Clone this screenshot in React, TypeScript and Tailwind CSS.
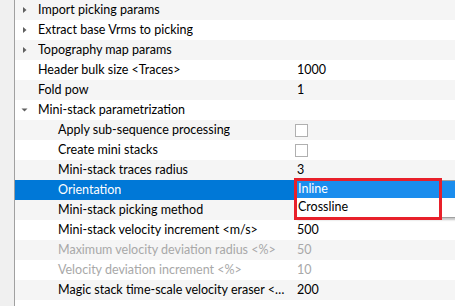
import React from 'react';

type Row = {
  label: string;
  value?: string;
  level: 0 | 1;
  arrow?: 'right' | 'down';
  checkbox?: boolean;
  disabled?: boolean;
  selected?: boolean;
};

const rows: Row[] = [
  { label: 'Import picking params', level: 0, arrow: 'right' },
  { label: 'Extract base Vrms to picking', level: 0, arrow: 'right' },
  { label: 'Topography map params', level: 0, arrow: 'right' },
  { label: 'Header bulk size <Traces>', value: '1000', level: 0 },
  { label: 'Fold pow', value: '1', level: 0 },
  { label: 'Mini-stack parametrization', level: 0, arrow: 'down' },
  { label: 'Apply sub-sequence processing', level: 1, checkbox: true },
  { label: 'Create mini stacks', level: 1, checkbox: true },
  { label: 'Mini-stack traces radius', value: '3', level: 1 },
  { label: 'Orientation', level: 1, selected: true },
  { label: 'Mini-stack picking method', level: 1 },
  { label: 'Mini-stack velocity increment <m/s>', value: '500', level: 1 },
  { label: 'Maximum velocity deviation radius <%>', value: '50', level: 1, disabled: true },
  { label: 'Velocity deviation increment <%>', value: '10', level: 1, disabled: true },
  { label: 'Magic stack time-scale velocity eraser <m/s>', value: '200', level: 1 },
];

const Arrow: React.FC<{ dir: 'right' | 'down' }> = ({ dir }) => (
  <svg width="8" height="8" viewBox="0 0 8 8" className="shrink-0">
    {dir === 'right' ? (
      <path d="M2 1 L5.5 4 L2 7 Z" fill="#606060" />
    ) : (
      <path d="M0.5 2.5 L6.5 2.5 L3.5 5.5 Z" fill="#606060" />
    )}
  </svg>
);

export default function App() {
  return (
    <div
      className="relative w-[455px] h-[306px] overflow-hidden bg-white flex text-[12.5px] text-black"
      style={{ fontFamily: 'Lato, "Segoe UI", sans-serif' }}
    >
      <div className="w-[15px] shrink-0 bg-[#f0f0f0] border-r border-[#a0a0a0]" />
      <div className="flex-1 flex flex-col">
        {rows.map((r, i) => (
          <div
            key={r.label}
            className={
              'h-[20px] flex items-center ' +
              (r.selected ? 'bg-[#0078d7] text-white' : i % 2 === 0 ? 'bg-[#f5f5f5]' : 'bg-white')
            }
          >
            <div className="w-[277px] shrink-0 flex items-center overflow-hidden">
              <div className="w-[23px] shrink-0 flex pl-[6px]">
                {r.arrow && <Arrow dir={r.arrow} />}
              </div>
              <span
                className={
                  'truncate whitespace-nowrap ' +
                  (r.level === 1 ? 'pl-[20px] ' : '') +
                  (r.disabled ? 'text-[#a8a8a8]' : '')
                }
              >
                {r.label}
              </span>
            </div>
            <div className="flex-1 pl-[5px] flex items-center">
              {r.checkbox ? (
                <div className="w-[13px] h-[13px] border border-[#b0b0b0] bg-white -ml-[2px]" />
              ) : (
                <span className={r.disabled ? 'text-[#a8a8a8]' : ''}>{r.value}</span>
              )}
            </div>
          </div>
        ))}
      </div>

      {/* combo popup */}
      <div className="absolute left-[295px] top-[180px] w-[170px] h-[38px] bg-white border border-[#a0a0a0] shadow-[2px_2px_2px_rgba(0,0,0,0.2)] flex flex-col">
        <div className="h-[17px] bg-[#1b8ded] text-white flex items-center pl-[2px]">Inline</div>
        <div className="h-[19px] flex items-center pl-[2px]">Crossline</div>
      </div>
      {/* annotation box */}
      <div className="absolute left-[294px] top-[178px] w-[148px] h-[42px] border-[3px] border-[#e8202a]" />
    </div>
  );
}
